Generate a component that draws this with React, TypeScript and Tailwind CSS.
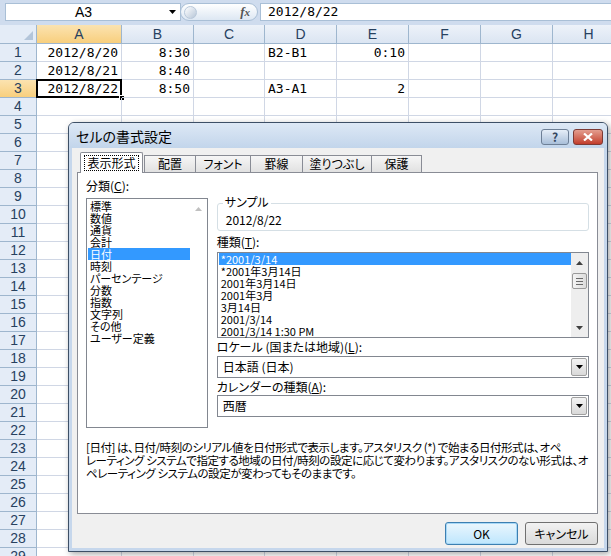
import React from "react";

const jp = "font-['Noto_Sans_CJK_JP','Noto_Sans',sans-serif] [font-feature-settings:'palt']";
const cellFont = "font-['DejaVu_Sans_Mono','Noto_Sans_CJK_JP',monospace]";

const cols = ["A", "B", "C", "D", "E", "F", "G", "H"];

type Cell = { v: string; left?: boolean };
const data: Record<number, Record<string, Cell>> = {
  1: { A: { v: "2012/8/20" }, B: { v: "8:30" }, D: { v: "B2-B1", left: true }, E: { v: "0:10" } },
  2: { A: { v: "2012/8/21" }, B: { v: "8:40" } },
  3: { A: { v: "2012/8/22" }, B: { v: "8:50" }, D: { v: "A3-A1", left: true }, E: { v: "2" } },
};

const categories = [
  "標準",
  "数値",
  "通貨",
  "会計",
  "日付",
  "時刻",
  "パーセンテージ",
  "分数",
  "指数",
  "文字列",
  "その他",
  "ユーザー定義",
];

const types = [
  "*2001/3/14",
  "*2001年3月14日",
  "2001年3月14日",
  "2001年3月",
  "3月14日",
  "2001/3/14",
  "2001/3/14 1:30 PM",
];

function DownTri({ className }: { className?: string }) {
  return (
    <svg width="7" height="4" viewBox="0 0 7 4" className={className}>
      <path d="M0 0h7L3.5 4z" fill="currentColor" />
    </svg>
  );
}

function UpTri({ className }: { className?: string }) {
  return (
    <svg width="7" height="4" viewBox="0 0 7 4" className={className}>
      <path d="M0 4h7L3.5 0z" fill="currentColor" />
    </svg>
  );
}

function Sheet() {
  const rows = Array.from({ length: 29 }, (_, i) => i + 1);
  return (
    <div className="flex flex-col">
      {/* formula bar */}
      <div className="h-[25px] bg-[#cfdcee] flex items-start pt-[3px] pl-[5px]">
        <div className="h-[18px] w-[176px] bg-white border border-[#a9bfd6] flex items-center relative">
          <span className="flex-1 text-center text-[14px] leading-[16px] font-['Liberation_Sans',sans-serif] text-black pr-[8px]">
            A3
          </span>
          <DownTri className="text-black mr-[4px]" />
        </div>
        <div className="h-[18px] w-[78px] ml-[-1px] rounded-full border border-[#a9bfd6] bg-gradient-to-b from-white to-[#dde7f3] flex items-center px-[3px]">
          <div className="w-[13px] h-[13px] rounded-full bg-gradient-to-br from-white to-[#b7c6d8] border border-[#b8c8da]" />
          <span className="ml-auto mr-[4px] text-[13px] leading-[14px] italic font-bold font-['Liberation_Serif',serif] text-[#555]">
            f<span className="text-[11px]">x</span>
          </span>
        </div>
        <div className="h-[18px] flex-1 ml-[2px] bg-white border border-[#a9bfd6] border-r-0 flex items-center pl-[7px]">
          <span className={`${cellFont} text-[13px] leading-[16px]`}>2012/8/22</span>
        </div>
      </div>
      {/* grid */}
      <div className="grid grid-cols-[37px_85px_72px_71px_72px_72px_72px_72px_72px]">
        <div className="h-[19px] bg-[#e4ecf7] border-r border-b border-[#9eb6ce] relative">
          <svg width="9" height="9" viewBox="0 0 9 9" className="absolute right-[3px] bottom-[3px]">
            <path d="M9 0v9H0z" fill="#b3c5da" />
          </svg>
        </div>
        {cols.map((c) => (
          <div
            key={c}
            className={`h-[19px] border-r border-b border-[#9eb6ce] flex items-center justify-center text-[14px] font-['Liberation_Sans',sans-serif] text-[#27415f] ${
              c === "A" ? "bg-gradient-to-b from-[#fbe3b0] to-[#f8cf7d]" : "bg-gradient-to-b from-[#edf2f9] to-[#dbe5f2]"
            }`}
          >
            {c}
          </div>
        ))}
        {rows.map((r) => (
          <React.Fragment key={r}>
            <div
              className={`h-[18px] border-r border-b border-[#9eb6ce] flex items-center justify-center text-[14px] font-['Liberation_Sans',sans-serif] text-[#27415f] ${
                r === 3 ? "bg-gradient-to-b from-[#fbe3b0] to-[#f8cf7d]" : "bg-[#e4ecf7]"
              }`}
            >
              {r}
            </div>
            {cols.map((c) => {
              const cell = data[r]?.[c];
              const sel = r === 3 && c === "A";
              return (
                <div
                  key={c}
                  className={`h-[18px] border-r border-b border-[#d0d7e5] relative flex items-center px-[3px] ${
                    cell?.left ? "justify-start" : "justify-end"
                  }`}
                >
                  {cell && (
                    <span className={`${cellFont} text-[13px] leading-[16px] text-black whitespace-nowrap`}>
                      {cell.v}
                    </span>
                  )}
                  {sel && (
                    <>
                      <div className="absolute left-[-1px] top-[-1px] right-[-1px] bottom-[-1px] border-2 border-black" />
                      <div className="absolute right-[-4px] bottom-[-4px] w-[6px] h-[6px] bg-black border border-white" />
                    </>
                  )}
                </div>
              );
            })}
          </React.Fragment>
        ))}
      </div>
    </div>
  );
}

function Tab({ label, w, active }: { label: string; w: string; active?: boolean }) {
  if (active) {
    return (
      <div
        className={`${w} h-[21px] bg-white border border-[#898c95] border-b-0 rounded-t-[2px] relative z-10 mb-[-1px] flex items-start justify-center pt-[2px]`}
      >
        <span className="border border-dotted border-black px-[2px] leading-[14px] text-[12px]">{label}</span>
      </div>
    );
  }
  return (
    <div
      className={`${w} h-[17px] bg-gradient-to-b from-[#f6f6f6] to-[#e1e1e1] border border-[#898c95] border-b-0 ml-[-1px] flex items-center justify-center text-[12px] leading-[14px]`}
    >
      {label}
    </div>
  );
}

function Select({ value }: { value: string }) {
  return (
    <div className="h-[22px] border border-[#828790] bg-white flex items-center pl-[5px] pr-[1px]">
      <span className="flex-1 text-[12px] leading-[14px]">{value}</span>
      <div className="w-[16px] h-[18px] border border-[#a0a0a0] rounded-[2px] bg-gradient-to-b from-[#f4f4f4] to-[#d9d9d9] flex items-center justify-center">
        <DownTri className="text-black" />
      </div>
    </div>
  );
}

function Dialog() {
  return (
    <div
      className={`${jp} absolute left-[68px] top-[122px] w-[540px] h-[430px] border border-[#3d4f66] rounded-t-[6px] bg-[#c6d7ec] flex flex-col text-black shadow-[2px_2px_6px_rgba(0,0,0,0.35)]`}
    >
      {/* title bar */}
      <div className="h-[25px] flex items-center rounded-t-[5px] bg-gradient-to-b from-[#dde8f5] to-[#c2d5eb] pl-[7px] pr-[4px] shrink-0">
        <span className="text-[14px] leading-[18px] text-black">セルの書式設定</span>
        <div className="ml-auto flex items-center gap-[4px] mt-[2px]">
          <div className="w-[28px] h-[16px] rounded-[3px] border border-[#6d7f96] bg-gradient-to-b from-[#e6eef8] to-[#a9bfd9] flex items-center justify-center text-[12px] leading-[12px] font-bold text-[#33475f]">
            ?
          </div>
          <div className="w-[30px] h-[16px] rounded-[3px] border border-[#7d3a34] bg-gradient-to-b from-[#e39d8f] to-[#c13b2b] flex items-center justify-center">
            <svg width="10" height="8" viewBox="0 0 10 8">
              <path d="M1 0.5L9 7.5M9 0.5L1 7.5" stroke="white" strokeWidth="2.2" />
            </svg>
          </div>
        </div>
      </div>
      {/* client */}
      <div className="flex-1 mx-[3px] mb-[3px] bg-[#f0f0f0] flex flex-col pl-[5px] pr-[6px] pt-[4px]">
        <div className="h-[20px] flex items-end pl-[3px]">
          <Tab label="表示形式" w="w-[63px]" active />
          <div className="w-[2px]" />
          <Tab label="配置" w="w-[52px]" />
          <Tab label="フォント" w="w-[56px]" />
          <Tab label="罫線" w="w-[53px]" />
          <Tab label="塗りつぶし" w="w-[70px]" />
          <Tab label="保護" w="w-[51px]" />
        </div>
        {/* panel */}
        <div className="h-[342px] border border-[#898c95] bg-white px-[8px] flex flex-col">
          <div className="flex gap-[9px]">
            {/* left column */}
            <div className="w-[122px] pt-[7px] flex flex-col">
              <div className="text-[12px] leading-[12px] mb-[6px]">
                分類(<span className="underline">C</span>):
              </div>
              <div className="h-[230px] border border-[#828790] flex">
                <div className="flex-1 pt-[1px] pl-[1px]">
                  {categories.map((c) => (
                    <div
                      key={c}
                      className={`h-[12px] text-[11px] leading-[12px] pl-[2px] whitespace-nowrap ${
                        c === "日付" ? "bg-[#3399ff] text-white" : ""
                      }`}
                    >
                      {c}
                    </div>
                  ))}
                </div>
                <div className="w-[17px] flex justify-center pt-[8px]">
                  <UpTri className="text-[#c0c0c0]" />
                </div>
              </div>
            </div>
            {/* right column */}
            <div className="w-[373px] flex flex-col pt-[30px]">
              <div className="h-[28px] border border-[#d5dfe5] rounded-[3px] relative flex items-center pl-[8px] pt-[6px]">
                <span className="absolute left-[5px] top-[-9px] bg-white px-[2px] text-[12px] leading-[14px]">
                  サンプル
                </span>
                <span className="text-[12px] leading-[12px]">2012/8/22</span>
              </div>
              <div className="text-[12px] leading-[12px] mt-[5px] mb-[4px]">
                種類(<span className="underline">T</span>):
              </div>
              <div className="h-[86px] border border-[#828790] flex">
                <div className="flex-1 pt-[0px] pl-[1px]">
                  {types.map((t, i) => (
                    <div
                      key={t}
                      className={`h-[12px] text-[11px] leading-[12px] pl-[2px] whitespace-nowrap ${
                        i === 0 ? "bg-[#3399ff] text-white" : ""
                      }`}
                    >
                      {t}
                    </div>
                  ))}
                </div>
                <div className="w-[17px] bg-[#eeeeee] flex flex-col items-center pt-[8px] pb-[7px]">
                  <UpTri className="text-[#404040]" />
                  <div className="mt-[8px] w-[15px] h-[16px] border border-[#9a9a9a] rounded-[2px] bg-gradient-to-r from-[#f4f4f4] to-[#dcdcdc] flex flex-col items-center justify-center gap-[2px]">
                    <div className="w-[7px] h-[1px] bg-[#6a6a6a]" />
                    <div className="w-[7px] h-[1px] bg-[#6a6a6a]" />
                    <div className="w-[7px] h-[1px] bg-[#6a6a6a]" />
                  </div>
                  <DownTri className="text-[#404040] mt-auto" />
                </div>
              </div>
              <div className="text-[12px] leading-[12px] mt-[3px] mb-[3px] whitespace-nowrap">
                ロケール (国または地域)(<span className="underline">L</span>):
              </div>
              <Select value="日本語 (日本)" />
              <div className="text-[12px] leading-[12px] mt-[3px] mb-[2px]">
                カレンダーの種類(<span className="underline">A</span>):
              </div>
              <Select value="西暦" />
            </div>
          </div>
          <p className="mt-[13px] text-[11.5px] leading-[13px] whitespace-nowrap tracking-[-0.45px]">
            [日付] は、日付/時刻のシリアル値を日付形式で表示します。アスタリスク (*) で始まる日付形式は、オペ
            <br />
            レーティング システムで指定する地域の日付/時刻の設定に応じて変わります。アスタリスクのない形式は、オ
            <br />
            ペレーティング システムの設定が変わってもそのままです。
          </p>
        </div>
        {/* buttons */}
        <div className="flex justify-end gap-[7px] mt-[8px]">
          <button className="w-[73px] h-[23px] rounded-[3px] border border-[#3c7fb1] bg-gradient-to-b from-[#eaf6fd] to-[#bee6fd] text-[12px] leading-[12px] shadow-[inset_0_0_0_1px_#a7d8f7]">
            OK
          </button>
          <button className="w-[73px] h-[23px] rounded-[3px] border border-[#707070] bg-gradient-to-b from-[#f2f2f2] to-[#dadada] text-[12px] leading-[12px]">
            キャンセル
          </button>
        </div>
      </div>
    </div>
  );
}

export default function App() {
  return (
    <div className="w-[611px] h-[556px] overflow-hidden relative bg-white">
      <Sheet />
      <Dialog />
    </div>
  );
}
